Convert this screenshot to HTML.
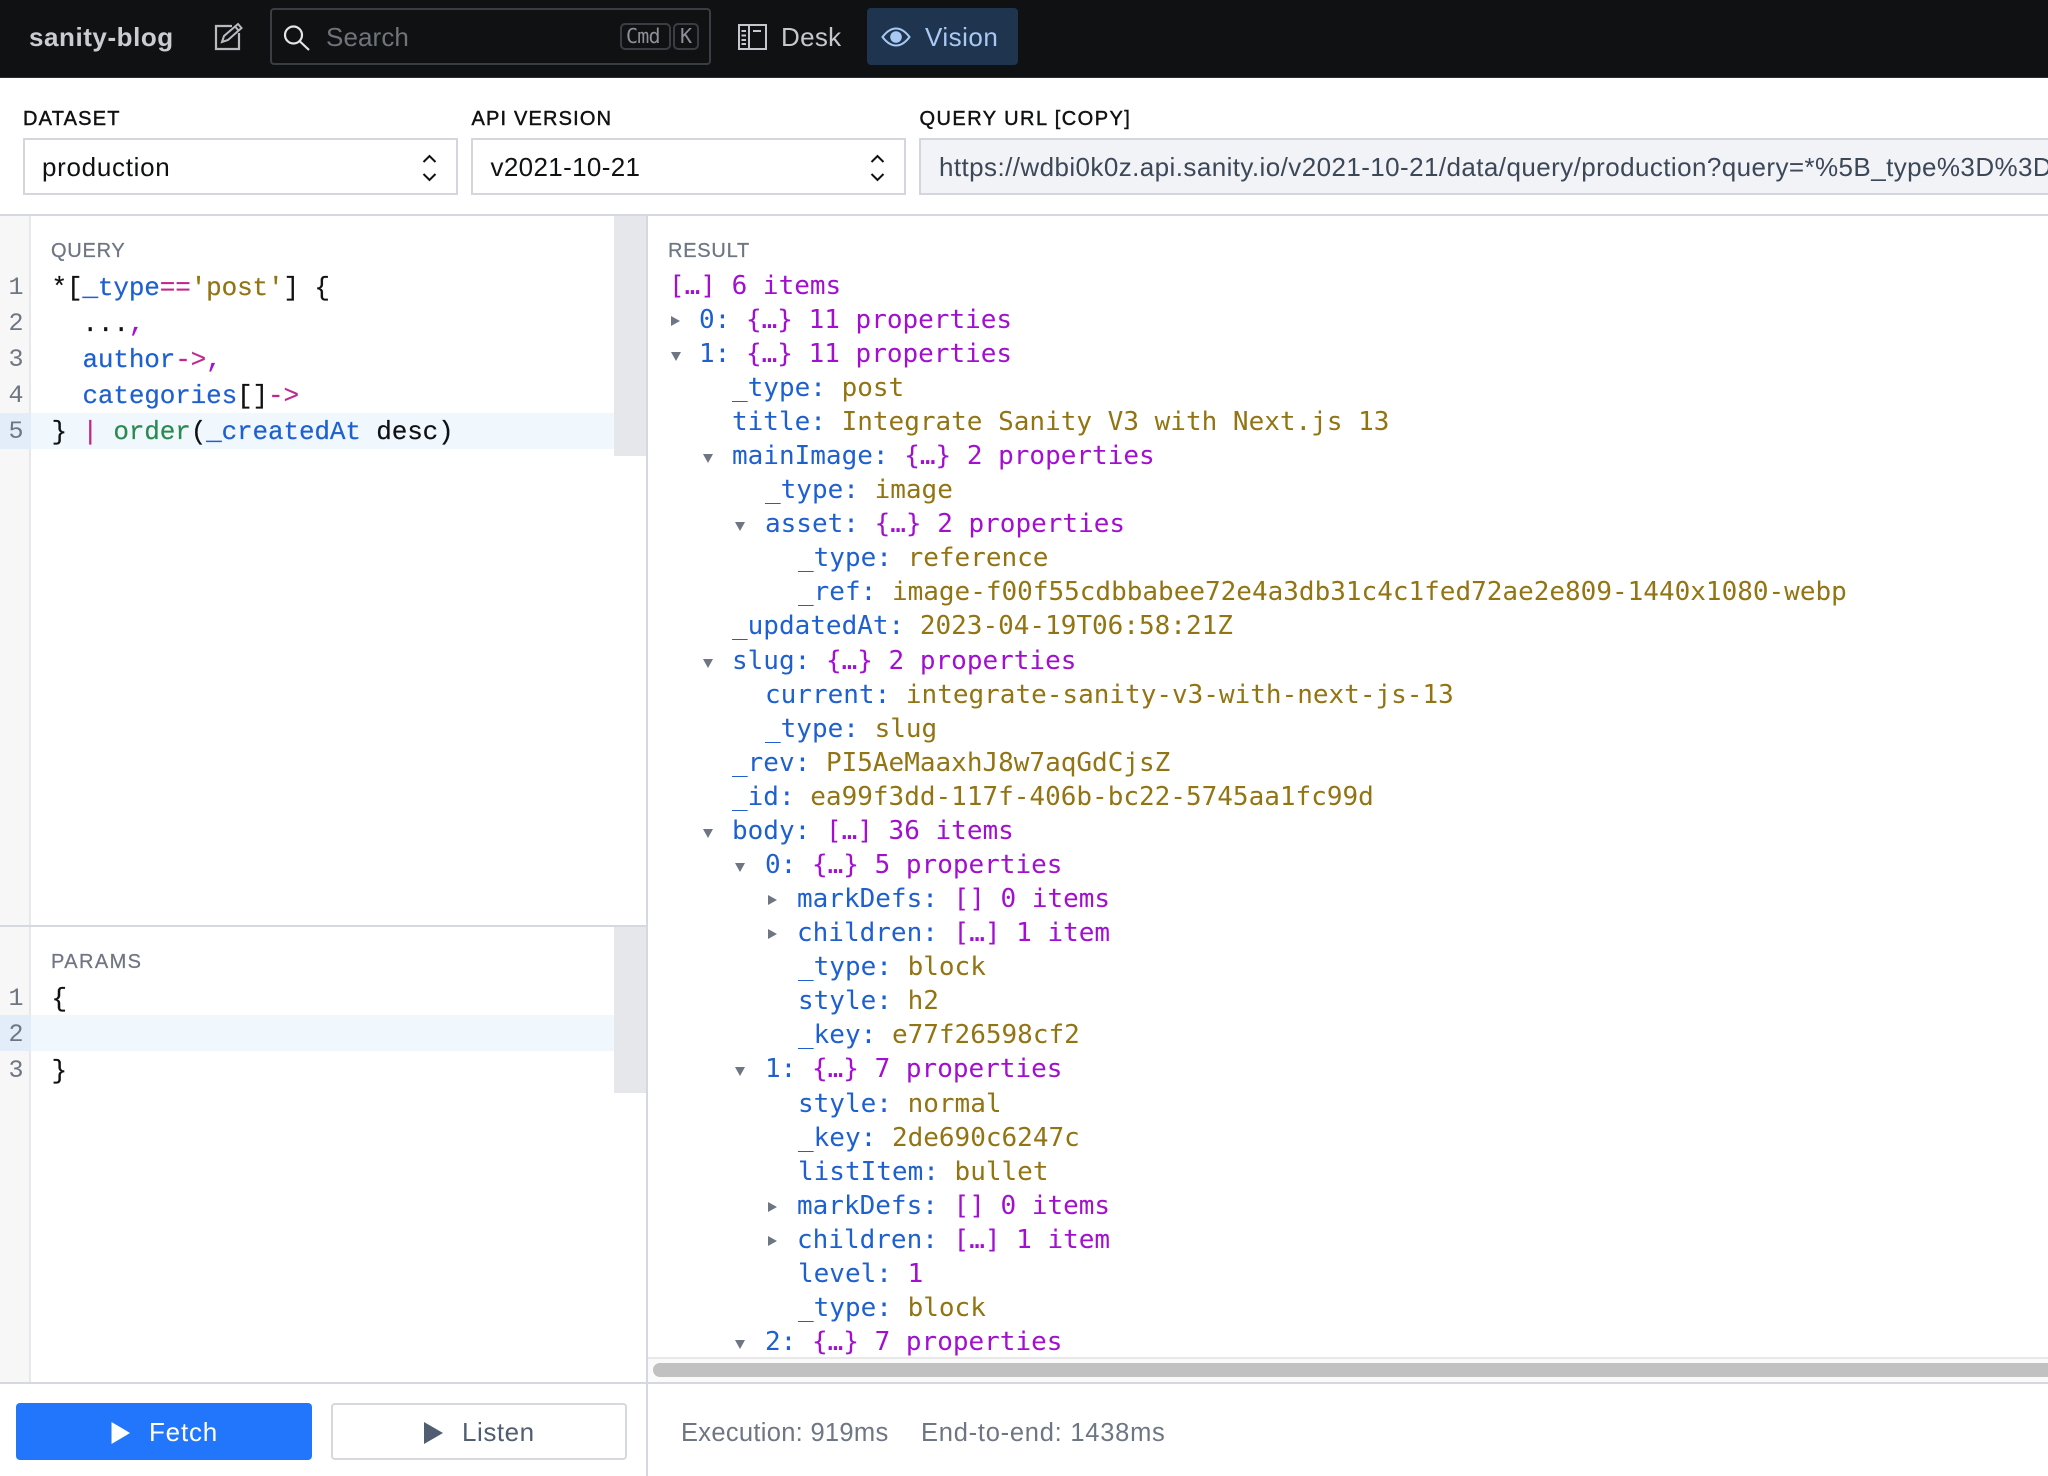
<!DOCTYPE html>
<html lang="en"><head><meta charset="utf-8"><title>Vision – sanity-blog</title>
<style>
*{box-sizing:border-box}
html,body{margin:0;padding:0;width:2048px;height:1476px;overflow:hidden;background:#fff}
body{position:relative;font-family:"Liberation Sans",Arial,sans-serif;color:#101112}
.a{position:absolute;white-space:pre}
.box{position:absolute}
nav{position:absolute;left:0;top:0;width:2048px;height:78px;background:#101112;border-bottom:1px solid #2a2d31}
svg{position:absolute;left:0;top:0;overflow:visible}
.lbl{font-size:20px;line-height:24px;top:107px;-webkit-text-stroke:.45px #101112;color:#101112}
.field{position:absolute;top:138px;height:57px;border:2px solid #d3d6dd;background:#fff}
.fv{font-size:26px;line-height:32px;top:151px;letter-spacing:.45px;color:#101112}
.sec{font-size:20px;line-height:24px;color:#6e7683;letter-spacing:.75px;-webkit-text-stroke:.25px #6e7683}
.cm{position:absolute;font:26px/36px "Liberation Mono",monospace;color:#101112;white-space:pre;left:51.500px;letter-spacing:-.14px;margin-top:1px;-webkit-text-stroke:.2px}
.gn{position:absolute;left:1px;width:30px;text-align:center;font:25px/36px "Liberation Mono",monospace;color:#6e7683;margin-top:1px}
.k{color:#1f60d0}.m{color:#c0278f}.s{color:#937413}.p{color:#a20fd0}.g{color:#2b8a50}
#clip{position:absolute;left:649px;top:216px;width:1399px;height:1141px;overflow:hidden}
#res{position:absolute;left:0;top:52.700px;font:26px/34.08px "DejaVu Sans Mono",monospace;width:1400px}
#res div{height:34.08px;position:relative;white-space:pre}
.l0{padding-left:50px}.l1{padding-left:83px}.l2{padding-left:116px}.l3{padding-left:149px}
.l3.tr{padding-left:148px}
.tr::before,.td::before{content:"";position:absolute;top:13px;width:0;height:0}
.tr::before{border-left:9px solid #6e7683;border-top:5px solid transparent;border-bottom:5px solid transparent}
.td::before{border-top:9px solid #6e7683;border-left:5px solid transparent;border-right:5px solid transparent;top:15px}
.l0.tr::before,.l0.td::before{left:22px}
.l1.tr::before,.l1.td::before{left:54px}
.l2.tr::before,.l2.td::before{left:86px}
.l3.tr::before,.l3.td::before{left:119px}
</style></head><body>

<nav></nav>
<div class="a" style="left:29px;top:21px;font-size:26px;line-height:32px;font-weight:700;color:#c9ccd1;letter-spacing:.55px">sanity-blog</div>
<div class="box" style="left:270px;top:8px;width:441px;height:57px;border:2px solid #3a3e44;border-radius:4px"></div>
<div class="a" style="left:326px;top:21px;font-size:26px;line-height:32px;color:#6f747b;letter-spacing:.1px">Search</div>
<div class="box" style="left:620px;top:23px;width:51px;height:27px;border:2px solid #3a3e44;border-radius:5px"></div>
<div class="box" style="left:673px;top:23px;width:26px;height:27px;border:2px solid #3a3e44;border-radius:5px"></div>
<div class="a" style="left:626px;top:24px;font:20px/25px 'DejaVu Sans Mono',monospace;color:#8c9097;letter-spacing:-.8px">Cmd</div>
<div class="a" style="left:680px;top:24px;font:20px/25px 'DejaVu Sans Mono',monospace;color:#8c9097">K</div>
<div class="a" style="left:781px;top:21px;font-size:26px;line-height:32px;color:#c4c7cc;letter-spacing:.3px">Desk</div>
<div class="box" style="left:867px;top:8px;width:151px;height:57px;background:#1f344f;border-radius:4px"></div>
<div class="a" style="left:925px;top:21px;font-size:26px;line-height:32px;color:#a9c9f5;letter-spacing:.5px">Vision</div>

<svg width="2048" height="120" fill="none">
<path d="M232 26H216V49H239V33" stroke="#b7babf" stroke-width="2.2"/>
<path d="M222 42L224 36L238 24L241.500 28L228 40Z M235.500 27L239 31" stroke="#b7babf" stroke-width="2"/>
<circle cx="293.500" cy="35" r="8.500" stroke="#e2e4e7" stroke-width="2.2"/>
<path d="M299.500 41L309 50" stroke="#e2e4e7" stroke-width="2.2"/>
<rect x="739" y="25" width="27" height="24" stroke="#c4c7cc" stroke-width="2"/>
<path d="M749 25V49M741.500 31H746M741.500 35.500H746M741.500 40H746M741.500 44H746M753 31H761" stroke="#c4c7cc" stroke-width="2"/>
<path d="M882.500 37C887 31 891 28.500 896 28.500C901 28.500 905 31 909.500 37C905 43 901 45.500 896 45.500C891 45.500 887 43 882.500 37Z" stroke="#a9c9f5" stroke-width="2"/>
<circle cx="896" cy="37" r="5.800" fill="#a9c9f5"/>
</svg>

<div class="a lbl" style="left:23px;letter-spacing:1.2px">DATASET</div>
<div class="a lbl" style="left:471.500px;letter-spacing:1.17px">API VERSION</div>
<div class="a lbl" style="left:919.500px;letter-spacing:1.45px">QUERY URL [COPY]</div>
<div class="field" style="left:23px;width:435px"></div>
<div class="field" style="left:471px;width:435px"></div>
<div class="field" style="left:919px;width:1140px;background:#f1f3f6"></div>
<div class="a fv" style="left:42px;letter-spacing:.7px">production</div>
<div class="a fv" style="left:490.500px;letter-spacing:.35px">v2021-10-21</div>
<div class="a fv" style="left:939px;color:#3c4758;letter-spacing:.42px;width:1109px;overflow:hidden">https://wdbi0k0z.api.sanity.io/v2021-10-21/data/query/production?query=*%5B_type%3D%3D</div>
<svg width="2048" height="220" fill="none">
<path d="M423.500 162L429.500 156L435.500 162M423.500 174L429.500 180L435.500 174" stroke="#101112" stroke-width="2"/>
<path d="M871.500 162L877.500 156L883.500 162M871.500 174L877.500 180L883.500 174" stroke="#101112" stroke-width="2"/>
</svg>

<!-- panes -->
<div class="box" style="left:0;top:214px;width:2048px;height:2px;background:#d5d8e0"></div>
<div class="box" style="left:646px;top:216px;width:2px;height:1260px;background:#d5d8e0"></div>
<div class="box" style="left:0;top:216px;width:31px;height:1166px;background:#f7f7f7;border-right:2px solid #e6e8ec"></div>
<div class="box" style="left:0;top:925px;width:646px;height:2px;background:#d5d8e0"></div>
<div class="box" style="left:614px;top:216px;width:32px;height:240px;background:#e6e7ea"></div>
<div class="box" style="left:614px;top:927px;width:32px;height:166px;background:#e6e7ea"></div>

<div class="box" style="left:31px;top:413px;width:583px;height:36px;background:#f0f8fe"></div>
<div class="box" style="left:0;top:413px;width:31px;height:36px;background:#e3edf9"></div>
<div class="box" style="left:31px;top:1015px;width:583px;height:36px;background:#f0f8fe"></div>
<div class="box" style="left:0;top:1015px;width:31px;height:36px;background:#e3edf9"></div>

<div class="a sec" style="left:51px;top:239px">QUERY</div>
<div class="gn" style="top:269px">1</div><div class="gn" style="top:305px">2</div><div class="gn" style="top:341px">3</div><div class="gn" style="top:377px">4</div><div class="gn" style="top:413px">5</div>
<div class="cm" style="top:269px">*[<span class="k">_type</span><span class="m">==</span><span class="s">'post'</span>] {</div>
<div class="cm" style="top:305px">  ...<span class="p">,</span></div>
<div class="cm" style="top:341px">  <span class="k">author</span><span class="m">-&gt;</span><span class="p">,</span></div>
<div class="cm" style="top:377px">  <span class="k">categories</span>[]<span class="m">-&gt;</span></div>
<div class="cm" style="top:413px">} <span class="m">|</span> <span class="g">order</span>(<span class="k">_createdAt</span> desc)</div>

<div class="a sec" style="left:51px;top:949.500px;letter-spacing:1.4px">PARAMS</div>
<div class="gn" style="top:980px">1</div><div class="gn" style="top:1016px">2</div><div class="gn" style="top:1052px">3</div>
<div class="cm" style="top:980px">{</div>
<div class="cm" style="top:1052px">}</div>

<div class="a sec" style="left:668px;top:239px">RESULT</div>

<div id="clip"><div id="res">
<div style="padding-left:20px"><span class="p">[…] 6 items</span></div>
<div class="l0 tr"><span class="k">0:</span> <span class="p">{…} 11 properties</span></div>
<div class="l0 td"><span class="k">1:</span> <span class="p">{…} 11 properties</span></div>
<div class="l1"><span class="k">_type:</span> <span class="s">post</span></div>
<div class="l1"><span class="k">title:</span> <span class="s">Integrate Sanity V3 with Next.js 13</span></div>
<div class="l1 td"><span class="k">mainImage:</span> <span class="p">{…} 2 properties</span></div>
<div class="l2"><span class="k">_type:</span> <span class="s">image</span></div>
<div class="l2 td"><span class="k">asset:</span> <span class="p">{…} 2 properties</span></div>
<div class="l3"><span class="k">_type:</span> <span class="s">reference</span></div>
<div class="l3"><span class="k">_ref:</span> <span class="s">image-f00f55cdbbabee72e4a3db31c4c1fed72ae2e809-1440x1080-webp</span></div>
<div class="l1"><span class="k">_updatedAt:</span> <span class="s">2023-04-19T06:58:21Z</span></div>
<div class="l1 td"><span class="k">slug:</span> <span class="p">{…} 2 properties</span></div>
<div class="l2"><span class="k">current:</span> <span class="s">integrate-sanity-v3-with-next-js-13</span></div>
<div class="l2"><span class="k">_type:</span> <span class="s">slug</span></div>
<div class="l1"><span class="k">_rev:</span> <span class="s">PI5AeMaaxhJ8w7aqGdCjsZ</span></div>
<div class="l1"><span class="k">_id:</span> <span class="s">ea99f3dd-117f-406b-bc22-5745aa1fc99d</span></div>
<div class="l1 td"><span class="k">body:</span> <span class="p">[…] 36 items</span></div>
<div class="l2 td"><span class="k">0:</span> <span class="p">{…} 5 properties</span></div>
<div class="l3 tr"><span class="k">markDefs:</span> <span class="p">[] 0 items</span></div>
<div class="l3 tr"><span class="k">children:</span> <span class="p">[…] 1 item</span></div>
<div class="l3"><span class="k">_type:</span> <span class="s">block</span></div>
<div class="l3"><span class="k">style:</span> <span class="s">h2</span></div>
<div class="l3"><span class="k">_key:</span> <span class="s">e77f26598cf2</span></div>
<div class="l2 td"><span class="k">1:</span> <span class="p">{…} 7 properties</span></div>
<div class="l3"><span class="k">style:</span> <span class="s">normal</span></div>
<div class="l3"><span class="k">_key:</span> <span class="s">2de690c6247c</span></div>
<div class="l3"><span class="k">listItem:</span> <span class="s">bullet</span></div>
<div class="l3 tr"><span class="k">markDefs:</span> <span class="p">[] 0 items</span></div>
<div class="l3 tr"><span class="k">children:</span> <span class="p">[…] 1 item</span></div>
<div class="l3"><span class="k">level:</span> <span class="p">1</span></div>
<div class="l3"><span class="k">_type:</span> <span class="s">block</span></div>
<div class="l2 td"><span class="k">2:</span> <span class="p">{…} 7 properties</span></div>
</div></div>

<div class="box" style="left:648px;top:1357px;width:1400px;height:25px;background:#fafafa;border-top:2px solid #e8e8e8"></div>
<div class="box" style="left:653px;top:1363px;width:1395px;height:14px;background:#c1c1c1;border-radius:7px 0 0 7px"></div>
<div class="box" style="left:0;top:1382px;width:2048px;height:2px;background:#d5d8e0"></div>

<div class="box" style="left:16px;top:1403px;width:296px;height:57px;background:#2276fc;border-radius:4px"></div>
<div class="box" style="left:331px;top:1403px;width:296px;height:57px;background:#fff;border:2px solid #d5d8e0;border-radius:4px"></div>
<svg width="2048" height="1476" fill="none">
<path d="M111.500 1422V1444L130 1433Z" fill="#fff"/>
<path d="M424 1422V1444L443 1433Z" fill="#515e72"/>
</svg>
<div class="a" style="left:149px;top:1416px;font-size:26px;line-height:32px;color:#fff;letter-spacing:.8px">Fetch</div>
<div class="a" style="left:462px;top:1416px;font-size:26px;line-height:32px;color:#515e72;letter-spacing:.55px">Listen</div>
<div class="a" style="left:681px;top:1417px;font-size:25.500px;line-height:32px;color:#6e7683;letter-spacing:.3px">Execution: 919ms</div>
<div class="a" style="left:921px;top:1417px;font-size:25.500px;line-height:32px;color:#6e7683;letter-spacing:.75px">End-to-end: 1438ms</div>
</body></html>
